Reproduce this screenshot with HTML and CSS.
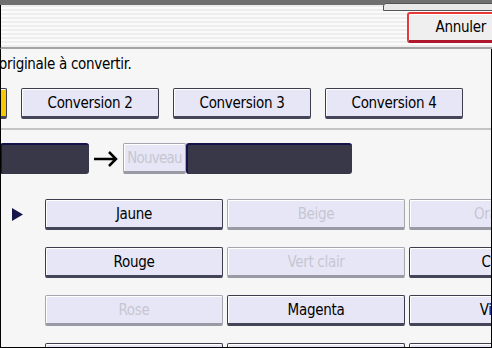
FILE: index.html
```html
<!DOCTYPE html>
<html lang="fr">
<head>
  <meta charset="UTF-8">
  <title>Conversion couleur</title>
  <link rel="stylesheet" href="styles.css">
</head>
<body>
  <div class="screen">
    <div class="topbar"><div class="tab"></div></div>
    <div class="header">
      <button class="btn-cancel">Annuler</button>
    </div>
    <div class="panel">
      <p class="hint">originale à convertir.</p>
      <div class="conv-row">
        <button class="btn btn-conv btn-active">Conversion 1</button>
        <button class="btn btn-conv">Conversion 2</button>
        <button class="btn btn-conv">Conversion 3</button>
        <button class="btn btn-conv">Conversion 4</button>
      </div>
      <div class="field-row">
        <div class="field field-old"></div>
        <span class="arrow">
          <svg width="26" height="16" viewBox="0 0 26 16">
            <path d="M1 8 H23 M16 1 L23 8 L16 15" fill="none" stroke="#000" stroke-width="2.5"/>
          </svg>
        </span>
        <button class="btn btn-new" disabled>Nouveau</button>
        <div class="field field-new"></div>
      </div>
      <div class="color-grid">
        <div class="marker"><svg width="11" height="13" viewBox="0 0 11 13"><path d="M0 0 L11 6.5 L0 13 Z" fill="#16164a"/></svg></div>
        <button class="btn">Jaune</button>
        <button class="btn" disabled>Beige</button>
        <button class="btn" disabled>Orange</button>
        <div class="marker"></div>
        <button class="btn">Rouge</button>
        <button class="btn" disabled>Vert clair</button>
        <button class="btn">Cyan</button>
        <div class="marker"></div>
        <button class="btn" disabled>Rose</button>
        <button class="btn">Magenta</button>
        <button class="btn">Violet</button>
        <div class="marker"></div>
        <button class="btn">Bleu</button>
        <button class="btn">Noir</button>
        <button class="btn">Gris</button>
      </div>
    </div>
  </div>
</body>
</html>
```

FILE: styles.css
```css
body {
  margin: 0;
  font-family: "Liberation Sans Narrow", "DejaVu Sans Condensed", sans-serif;
  background-color: #000;
}
.screen {
  width: 492px;
  height: 348px;
  overflow: hidden;
  background-color: #f5f5f5;
}
.topbar {
  height: 5px;
  background-color: #6f6f6f;
  position: relative;
}
.tab {
  position: absolute;
  left: 383px;
  top: 3px;
  width: 120px;
  height: 6px;
  border: 1px solid #555;
  border-radius: 3px 0 0 0;
  background-color: #e8e8e8;
}
.header {
  height: 44px;
  background: repeating-linear-gradient(to bottom, #eeeeee 0, #eeeeee 2px, #fbfbfb 2px, #fbfbfb 4px);
  border-bottom: 2px solid #a4a4a4;
  border-left: 1px solid #000;
  display: flex;
  justify-content: flex-end;
  align-items: flex-start;
  padding-top: 7px;
  box-sizing: border-box;
}
.btn-cancel {
  width: 86px;
  height: 31px;
  margin-right: -1px;
  font-family: inherit;
  font-size: 15px;
  letter-spacing: -0.3px;
  color: #000;
  background-color: #efefef;
  border: 2px solid #e83838;
  border-bottom: 3px solid #b01830;
  border-right: none;
  border-radius: 3px 0 0 3px;
  box-shadow: inset 1px 1px 0 #fff;
  text-align: right;
  padding: 0 7px 0 0;
}
.panel {
  height: 299px;
  border: 1px solid #000;
  border-top: none;
  box-sizing: border-box;
  background-color: #f6f6f6;
  padding-top: 5px;
  overflow: hidden;
}
.hint {
  margin: 0 0 0 -2px;
  font-size: 15px;
  letter-spacing: -0.3px;
  line-height: 20px;
  color: #000;
}
.btn {
  font-family: inherit;
  font-size: 15px;
  letter-spacing: -0.3px;
  color: #000;
  background-color: #e6e6f6;
  border: 1px solid #3c3c4c;
  border-bottom: 3px solid #45455a;
  border-radius: 2px;
  box-shadow: inset 1px 1px 0 #fff;
  padding: 0;
  white-space: nowrap;
  overflow: hidden;
}
.btn:disabled {
  color: #c6c6d2;
  border-color: #a6a6ae;
  border-bottom-color: #9a9aa4;
}
.conv-row {
  display: flex;
  gap: 14px;
  margin-top: 14px;
  margin-left: -132px;
  padding-bottom: 9px;
  border-bottom: 2px solid #c4c4c4;
}
.btn-conv {
  width: 138px;
  height: 31px;
  flex: none;
}
.btn-active {
  background-color: #f6c800;
}
.field-row {
  display: flex;
  align-items: center;
  margin-top: 13px;
  margin-left: -1px;
}
.field {
  height: 31px;
  background-color: #383848;
  border-top: 2px solid #14144a;
  border-left: 2px solid #14144a;
  border-radius: 3px;
  box-sizing: border-box;
}
.field-old {
  width: 89px;
}
.field-new {
  width: 166px;
}
.arrow {
  display: flex;
  margin: 0 4px 0 4px;
}
.btn-new {
  width: 63px;
  height: 31px;
  font-size: 15px;
  letter-spacing: -0.8px;
}
.color-grid {
  display: grid;
  grid-template-columns: 41px 178px 178px 178px;
  column-gap: 4px;
  row-gap: 17px;
  margin-top: 25px;
  margin-left: -1px;
}
.color-grid .btn {
  height: 31px;
}
.marker {
  display: flex;
  align-items: center;
  padding-left: 12px;
}
```
